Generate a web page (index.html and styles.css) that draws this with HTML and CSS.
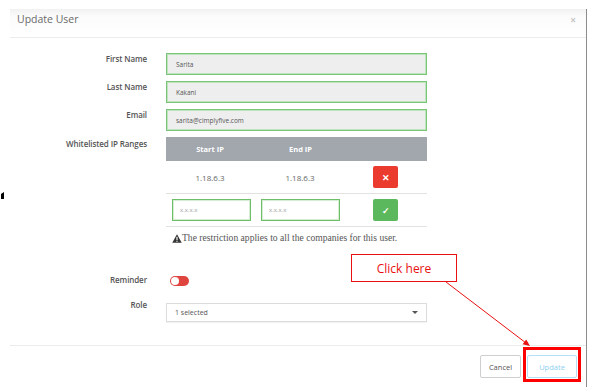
FILE: index.html
```html
<!DOCTYPE html>
<html>
<head>
<meta charset="utf-8">
<link rel="stylesheet" href="styles.css">
</head>
<body>
<div class="page">
  <div class="mark"></div>
  <div class="modal">
    <div class="modal-header">
      <span class="title">Update User</span>
      <span class="close">×</span>
    </div>
    <div class="modal-body">
      <div class="row">
        <div class="label">First Name</div>
        <div class="input">Sarita</div>
      </div>
      <div class="row">
        <div class="label">Last Name</div>
        <div class="input">Kakani</div>
      </div>
      <div class="row">
        <div class="label">Email</div>
        <div class="input">sarita@cimplyfive.com</div>
      </div>
      <div class="row">
        <div class="label label-ip">Whitelisted IP Ranges</div>
        <div class="ipblock">
          <div class="table">
            <div class="thead">
              <div class="c1">Start IP</div>
              <div class="c2">End IP</div>
              <div class="c3"></div>
            </div>
            <div class="trow">
              <div class="c1">1.18.6.3</div>
              <div class="c2">1.18.6.3</div>
              <div class="c3"><span class="btn-sq red">✕</span></div>
            </div>
            <div class="trow trow-2">
              <div class="c1"><span class="ipin">x.x.x.x</span></div>
              <div class="c2"><span class="ipin">x.x.x.x</span></div>
              <div class="c3"><span class="btn-sq green">✓</span></div>
            </div>
          </div>
          <div class="warn">
            <svg class="warn-icon" viewBox="0 0 12 11" width="10" height="9"><path d="M6 0.3 L11.8 10.7 L0.2 10.7 Z" fill="#333"/><rect x="5.3" y="3.4" width="1.4" height="4" fill="#fff"/><rect x="5.3" y="8.2" width="1.4" height="1.4" fill="#fff"/></svg><span>The restriction applies to all the companies for this user.</span>
          </div>
        </div>
      </div>
      <div class="row row-rem">
        <div class="label">Reminder</div>
        <div class="toggle"><span class="knob"></span></div>
      </div>
      <div class="row row-role">
        <div class="label label-role">Role</div>
        <div class="select"><span>1 selected</span><span class="caret"></span></div>
      </div>
    </div>
    <div class="modal-footer">
      <button class="btn btn-cancel">Cancel</button>
      <button class="btn btn-update">Update</button>
    </div>
  </div>
  <div class="callout">Click here</div>
  <svg class="arrow" viewBox="0 0 599 387" width="599" height="387">
    <line x1="446" y1="282" x2="526" y2="343" stroke="#e81010" stroke-width="1"/>
    <polygon points="530,346 522.6,344.2 526.2,339.4" fill="#e81010"/>
  </svg>
  <div class="highlight"></div>
</div>
</body>
</html>
```

FILE: styles.css
```css
html, body {
  margin: 0;
  padding: 0;
  background: #fff;
}
body {
  font-family: "Open Sans", "Liberation Sans", sans-serif;
}
.page {
  position: relative;
  width: 599px;
  height: 387px;
  overflow: hidden;
  padding: 9px 0 0 10px;
  box-sizing: border-box;
}
.mark {
  position: absolute;
  left: 1px;
  top: 192px;
  width: 3px;
  height: 7px;
  background: #000;
  clip-path: polygon(0 30%, 100% 0, 100% 100%, 0 100%);
}
.modal {
  width: 577px;
  height: 378px;
  border-right: 1px solid #8c8c8c;
  box-sizing: border-box;
  display: flex;
  flex-direction: column;
}
.modal-header {
  height: 29px;
  box-sizing: border-box;
  border-bottom: 1px solid #ececec;
  background: linear-gradient(#f1f1f1, #fbfbfb 25%, #fff);
  display: flex;
  justify-content: space-between;
  align-items: flex-start;
  padding: 4px 10px 0 7px;
}
.title {
  font-size: 10.5px;
  line-height: 12px;
  color: #6a6a6a;
}
.close {
  font-size: 10px;
  line-height: 10px;
  color: #c8c8c8;
  font-weight: 700;
  margin-top: 2px;
}
.modal-body {
  flex: 1;
  padding-top: 15px;
}
.row {
  display: flex;
  column-gap: 19px;
  margin-bottom: 6px;
}
.label {
  width: 137px;
  flex: none;
  text-align: right;
  font-size: 8px;
  font-weight: 600;
  line-height: 12px;
  color: #555;
  letter-spacing: -0.1px;
}
.label-ip {
  padding-top: 1px;
}
.label-role {
  padding-top: 2px;
}
.input {
  width: 261px;
  height: 22px;
  box-sizing: border-box;
  border: 1px solid #79c476;
  box-shadow: inset 0 0 0 1px #bfe3bc;
  background: #eeeeee;
  font-size: 6.5px;
  color: #555;
  padding-left: 9px;
  display: flex;
  align-items: center;
}
.ipblock {
  width: 261px;
}
.table {
  width: 261px;
}
.thead, .trow {
  display: flex;
  align-items: center;
}
.c1 { width: 88px; text-align: center; }
.c2 { width: 92px; text-align: center; }
.c3 { width: 81px; text-align: center; }
.thead {
  height: 24px;
  background: #a2a6ad;
  color: #fff;
  font-size: 7.5px;
  font-weight: 700;
}
.thead .c2 {
  text-align: left;
  padding-left: 35px;
  box-sizing: border-box;
}
.trow {
  height: 32px;
  border-bottom: 1px solid #e2e2e2;
  font-size: 8px;
  color: #666;
}
.trow-2 {
  height: 32px;
}
.trow-2 .c1, .trow-2 .c2 {
  text-align: left;
  display: flex;
}
.trow-2 .c1 { padding-left: 6px; box-sizing: border-box; }
.trow-2 .c2 { padding-left: 7px; box-sizing: border-box; }
.ipin {
  width: 79px;
  height: 22px;
  box-sizing: border-box;
  border: 1px solid #6dbd69;
  box-shadow: inset 0 0 0 1px #d5eed3;
  background: #fff;
  font-size: 6px;
  color: #999;
  padding-left: 7px;
  display: flex;
  align-items: center;
}
.c3 {
  display: flex;
  justify-content: center;
}
.btn-sq {
  width: 25px;
  height: 22px;
  border-radius: 2px;
  color: #fff;
  font-size: 9px;
  font-weight: 700;
  display: flex;
  align-items: center;
  justify-content: center;
  margin-left: -2px;
}
.red { background: #eb3a2e; }
.green { background: #5cb85c; }
.warn {
  margin-top: 5px;
  padding-left: 6px;
  display: flex;
  align-items: center;
  font-family: "Liberation Serif", serif;
  font-size: 9.6px;
  line-height: 12px;
  color: #555;
}
.warn-icon {
  margin-right: 0;
}
.row-rem {
  margin-top: 30px;
  margin-bottom: 11px;
}
.toggle {
  margin-left: 4px;
  margin-top: 2px;
  width: 19px;
  height: 10px;
  border-radius: 5px;
  background: #e0443f;
  position: relative;
}
.knob {
  position: absolute;
  left: 1px;
  top: 1px;
  width: 8px;
  height: 8px;
  border-radius: 50%;
  background: #fff;
}
.select {
  margin-top: 6px;
  width: 261px;
  height: 19px;
  box-sizing: border-box;
  border: 1px solid #dcdcdc;
  box-shadow: 0 1px 1px rgba(0,0,0,0.05);
  display: flex;
  align-items: center;
  justify-content: space-between;
  padding: 0 8px 0 8px;
  font-size: 7px;
  color: #555;
}
.caret {
  width: 0;
  height: 0;
  border-left: 3px solid transparent;
  border-right: 3px solid transparent;
  border-top: 3px solid #555;
}
.modal-footer {
  height: 42px;
  box-sizing: border-box;
  border-top: 1px solid #ececec;
  display: flex;
  justify-content: flex-end;
  align-items: flex-start;
  padding: 9px 9px 0 0;
  gap: 6px;
}
.btn {
  height: 23px;
  box-sizing: border-box;
  background: #fff;
  border-radius: 2px;
  font-family: "Open Sans", sans-serif;
  font-size: 7.5px;
  padding: 0;
}
.btn-cancel {
  width: 41px;
  border: 1px solid #cfcfcf;
  color: #555;
}
.btn-update {
  width: 50px;
  border: 1px solid #b3e0f5;
  color: #8fd1f2;
}
.callout {
  position: absolute;
  left: 351px;
  top: 254px;
  width: 106px;
  height: 28px;
  box-sizing: border-box;
  border: 1px solid #e81010;
  background: #fff;
  color: #e81010;
  font-size: 12px;
  display: flex;
  align-items: center;
  justify-content: center;
}
.arrow {
  position: absolute;
  left: 0;
  top: 0;
  pointer-events: none;
}
.highlight {
  position: absolute;
  left: 523px;
  top: 347px;
  width: 58px;
  height: 35px;
  box-sizing: border-box;
  border: 3px solid #f00;
}
```
